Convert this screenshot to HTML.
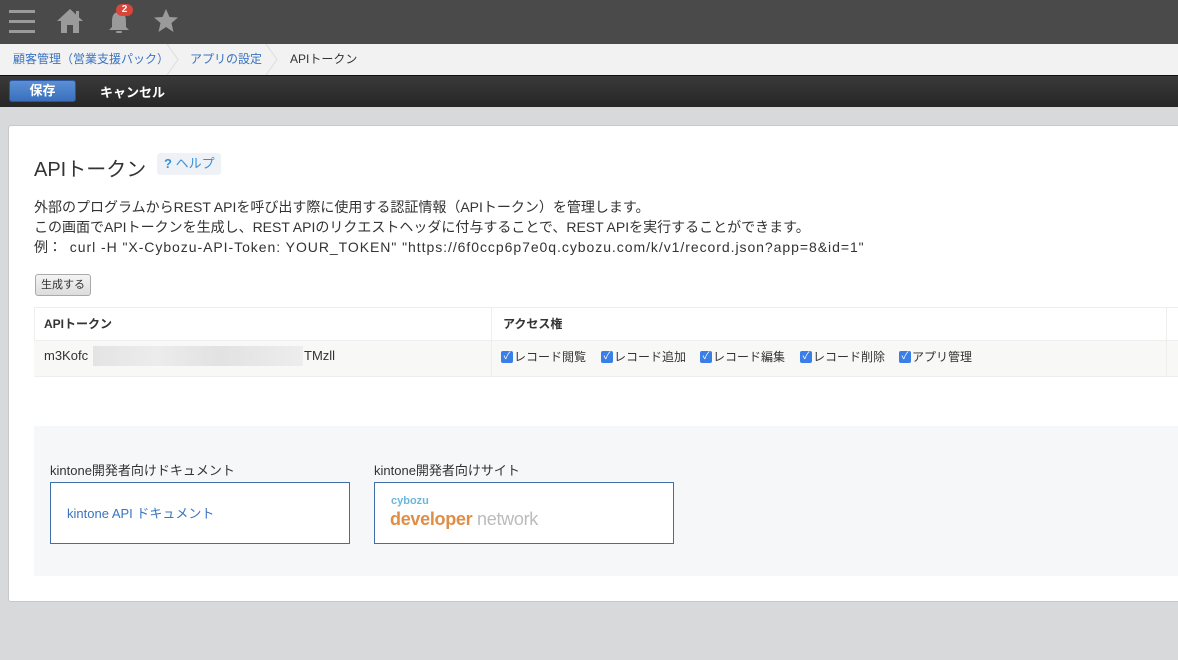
<!DOCTYPE html>
<html><head><meta charset="utf-8"><style>
*{box-sizing:border-box;margin:0;padding:0}
body{width:1178px;height:660px;overflow:hidden;background:#d8d9da;font-family:"Liberation Sans","Noto Sans CJK JP",sans-serif;color:#333;position:relative}
.top{position:absolute;left:0;top:0;width:1178px;height:44px;background:#4a4a4a}
.bc{position:absolute;left:0;top:44px;width:1178px;height:31px;background:#f2f2f2;font-size:12px}
.bc span{position:absolute;top:6px}
.bar{position:absolute;left:0;top:75px;width:1178px;height:32px;background:linear-gradient(#3a3a3a,#262626);border-top:1px solid #111}
.save{position:absolute;left:9px;top:4px;width:67px;height:22px;background:linear-gradient(#5b90d6,#3a6fbd);border:1px solid #2b559a;border-radius:3px;color:#fff;font-size:13px;font-weight:bold;text-align:center;line-height:20px}
.cancel{position:absolute;left:100px;top:6px;color:#fff;font-size:13px;font-weight:bold}
.card{position:absolute;left:8px;top:125px;width:1180px;height:477px;background:#fff;border:1px solid #c8c8c8;border-radius:3px}
.abs{position:absolute}
.perm{position:absolute;top:222px;font-size:12px;display:flex;align-items:center;white-space:nowrap}
.cb{display:inline-block;width:12px;height:12px;background:#3a7ee8;border-radius:2px;color:#fff;font-size:10px;line-height:12px;text-align:center;margin-right:1px}
</style></head><body>
<div class="top">
<svg class="abs" style="left:9px;top:9px" width="26" height="26"><rect y="1" width="26" height="3" fill="#9a9a9a"/><rect y="11" width="26" height="3" fill="#9a9a9a"/><rect y="21" width="26" height="3" fill="#9a9a9a"/></svg>
<svg class="abs" style="left:57px;top:8px" width="26" height="26"><path d="M13 1 L26 13 L22 13 L22 25 L16 25 L16 17 L10 17 L10 25 L4 25 L4 13 L0 13 Z" fill="#9a9a9a"/><rect x="19" y="3" width="3" height="6" fill="#9a9a9a"/></svg>
<svg class="abs" style="left:107px;top:10px" width="24" height="26"><path d="M12 2 C6 2 5 7 5 12 L5 17 L2 20 L22 20 L19 17 L19 12 C19 7 18 2 12 2Z" fill="#9a9a9a"/><rect x="9" y="21" width="6" height="2" rx="1" fill="#9a9a9a"/></svg>
<div class="abs" style="left:116px;top:4px;width:17px;height:12px;background:#d9453a;border-radius:6px;color:#fff;font-size:10px;font-weight:bold;text-align:center;line-height:12px">2</div>
<svg class="abs" style="left:153px;top:9px" width="26" height="24"><path d="M13 0 L16.5 8 L25 8.5 L18.5 14 L20.5 23 L13 18 L5.5 23 L7.5 14 L1 8.5 L9.5 8 Z" fill="#9a9a9a"/></svg>
</div>
<div class="bc">
<span style="left:13px;color:#3a73c0">顧客管理（営業支援パック）</span>
<svg class="abs" style="left:166px;top:0" width="14" height="31"><path d="M1 0 L12 15.5 L1 31" stroke="#ddd" fill="none"/></svg>
<span style="left:190px;color:#3a73c0">アプリの設定</span>
<svg class="abs" style="left:265px;top:0" width="14" height="31"><path d="M1 0 L12 15.5 L1 31" stroke="#ddd" fill="none"/></svg>
<span style="left:290px;color:#333">APIトークン</span>
</div>
<div class="bar"><div class="save">保存</div><div class="cancel">キャンセル</div></div>
<div class="card">
<div class="abs" style="left:25px;top:27px;font-size:20px;color:#333">APIトークン</div>
<div class="abs" style="left:148px;top:27px;width:64px;height:22px;background:#eef1f5;border-radius:3px;font-size:13px;color:#3a8fd8;line-height:22px;padding-left:7px"><b>?</b> ヘルプ</div>
<div class="abs" style="left:25px;top:71px;font-size:14px;line-height:20px;color:#333;white-space:nowrap">外部のプログラムからREST APIを呼び出す際に使用する認証情報（APIトークン）を管理します。<br>この画面でAPIトークンを生成し、REST APIのリクエストヘッダに付与することで、REST APIを実行することができます。<br>例：&nbsp; <span style="letter-spacing:0.95px">curl -H "X-Cybozu-API-Token: YOUR_TOKEN" "https://6f0ccp6p7e0q.cybozu.com/k/v1/record.json?app=8&amp;id=1"</span></div>
<div class="abs" style="left:26px;top:148px;width:56px;height:22px;background:linear-gradient(#f4f4f4,#dcdcdc);border:1px solid #aaa;border-radius:3px;font-size:11px;text-align:center;line-height:20px">生成する</div>
<div class="abs" style="left:25px;top:181px;width:1160px;height:70px;border:1px solid #eee;border-width:1px 0 1px 1px"></div>
<div class="abs" style="left:25px;top:214px;width:1160px;height:36px;background:#f8f8f7;border-top:1px solid #eee"></div>
<div class="abs" style="left:482px;top:181px;width:1px;height:70px;background:#eee"></div>
<div class="abs" style="left:1157px;top:181px;width:1px;height:70px;background:#eee"></div>
<div class="abs" style="left:35px;top:189px;font-size:12px;font-weight:bold">APIトークン</div>
<div class="abs" style="left:494px;top:189px;font-size:12px;font-weight:bold">アクセス権</div>
<div class="abs" style="left:35px;top:222px;font-size:13px">m3Kofc</div>
<div class="abs" style="left:84px;top:220px;width:210px;height:20px;background:linear-gradient(90deg,#e4e4e4,#ececec 30%,#e2e2e2 60%,#ededed)"></div>
<div class="abs" style="left:295px;top:222px;font-size:13px">TMzll</div>
<div class="perm" style="left:492px"><span class="cb">✓</span>レコード閲覧</div>
<div class="perm" style="left:592px"><span class="cb">✓</span>レコード追加</div>
<div class="perm" style="left:691px"><span class="cb">✓</span>レコード編集</div>
<div class="perm" style="left:791px"><span class="cb">✓</span>レコード削除</div>
<div class="perm" style="left:890px"><span class="cb">✓</span>アプリ管理</div>
<div class="abs" style="left:25px;top:300px;width:1160px;height:150px;background:#f6f7f9"></div>
<div class="abs" style="left:41px;top:334px;font-size:13px">kintone開発者向けドキュメント</div>
<div class="abs" style="left:41px;top:356px;width:300px;height:62px;background:#fff;border:1px solid #3f6ea8;font-size:13px;color:#3a73c0;padding:20px 0 0 16px">kintone API ドキュメント</div>
<div class="abs" style="left:365px;top:334px;font-size:13px">kintone開発者向けサイト</div>
<div class="abs" style="left:365px;top:356px;width:300px;height:62px;background:#fff;border:1px solid #3f6ea8">
<div class="abs" style="left:16px;top:12px;font-size:11px;font-weight:bold;color:#6cb6dc">cybozu</div>
<div class="abs" style="left:15px;top:26px;font-size:18px;color:#e08d45;font-weight:bold;letter-spacing:-0.3px">developer <span style="color:#bbb;font-weight:normal">network</span></div>
</div>
</div>
</body></html>
